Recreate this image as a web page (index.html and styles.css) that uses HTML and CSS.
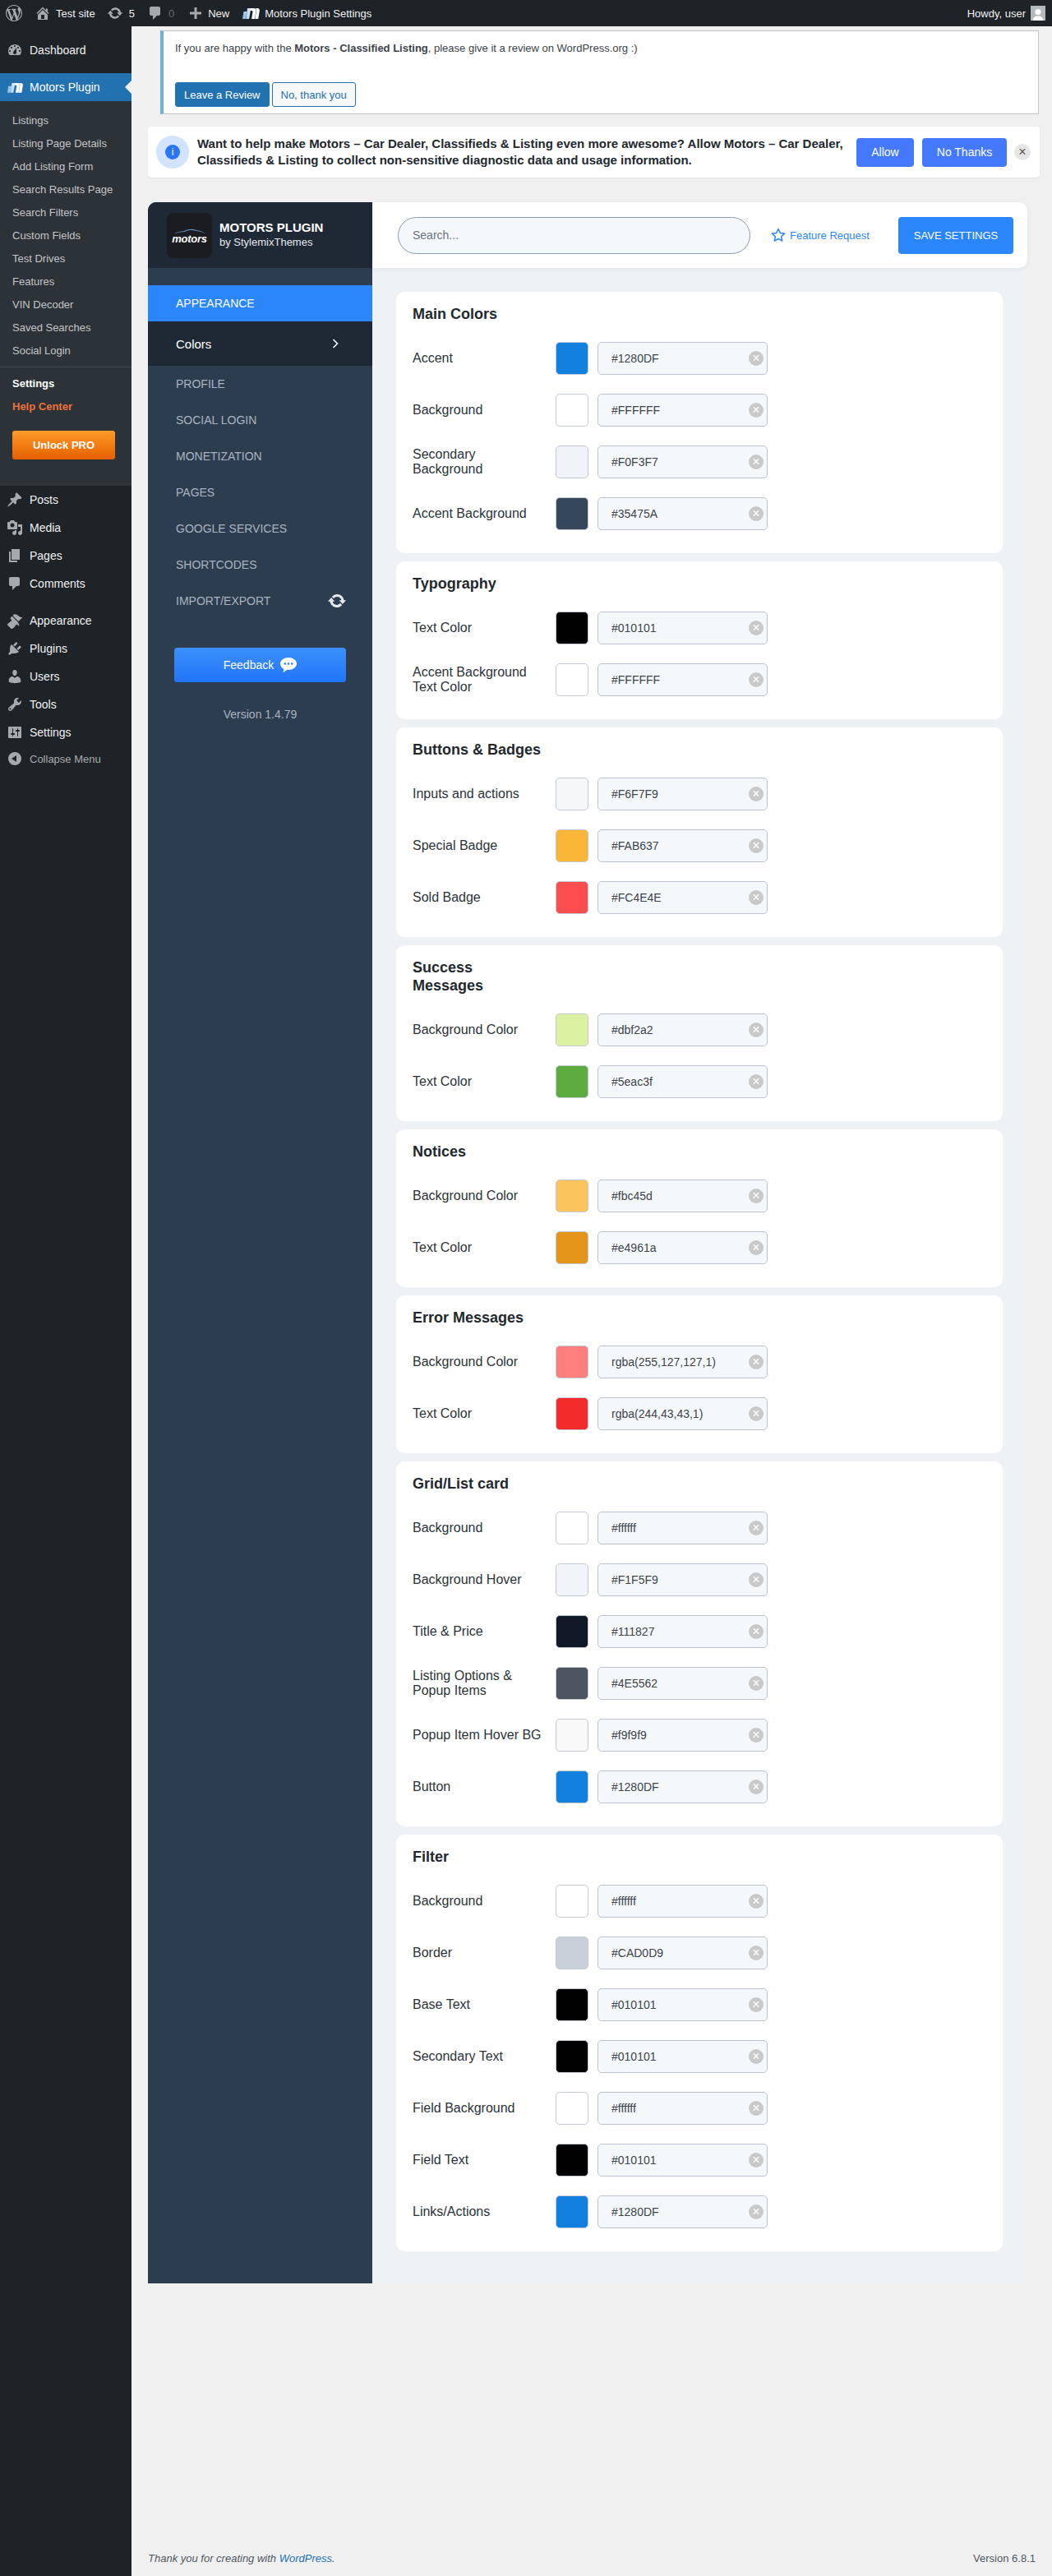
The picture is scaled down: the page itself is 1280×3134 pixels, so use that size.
FILE: index.html
```html
<!DOCTYPE html>
<html lang="en">
<head>
  <meta charset="UTF-8" />
  <title>Motors Plugin Settings</title>
  <link rel="stylesheet" href="styles.css">
</head>
<body>
  <svg class="sprite" xmlns="http://www.w3.org/2000/svg">
    <defs>
      <linearGradient id="mgrad" x1="0" x2="1" y1="0" y2="0"><stop offset="0" stop-color="#7fb4e8"/><stop offset="0.6" stop-color="#ffffff"/></linearGradient>
      <symbol id="i-wp" viewBox="0 0 20 20"><path d="M20 10c0-5.51-4.49-10-10-10C4.48 0 0 4.49 0 10c0 5.52 4.48 10 10 10 5.51 0 10-4.48 10-10zM7.78 15.37L4.37 6.22c.55-.02 1.17-.08 1.17-.08.5-.06.44-1.13-.06-1.11 0 0-1.45.11-2.37.11-.18 0-.37 0-.58-.01C4.12 2.69 6.87 1.11 10 1.11c2.33 0 4.45.87 6.05 2.34-.68-.11-1.65.39-1.65 1.58 0 .74.45 1.36.9 2.1.35.61.55 1.36.55 2.46 0 1.49-1.4 5-1.4 5l-3.03-8.37c.54-.02.82-.17.82-.17.5-.05.44-1.25-.06-1.22 0 0-1.44.12-2.38.12-.87 0-2.33-.12-2.33-.12-.5-.03-.56 1.2-.06 1.22l.92.08 1.26 3.41zM17.41 10c.24-.64.74-1.87.43-4.25.7 1.29 1.05 2.71 1.05 4.25 0 3.29-1.73 6.24-4.4 7.78.97-2.59 1.94-5.2 2.92-7.78zM6.1 18.09C3.12 16.65 1.11 13.53 1.11 10c0-1.3.23-2.48.72-3.59C3.25 10.3 4.67 14.2 6.1 18.09zm4.03-6.63l2.58 6.98c-.86.29-1.76.45-2.71.45-.79 0-1.57-.11-2.29-.33.81-2.38 1.62-4.74 2.42-7.1z"/></symbol>
      <symbol id="i-home" viewBox="0 0 20 20"><path d="M16 8.5l1.53 1.53-1.06 1.06L10 4.62l-6.47 6.47-1.06-1.06L10 2.5l4 4v-2h2v4zm-6-2.46l6 5.99V18H4v-5.97zM12 17v-5H8v5h4z"/></symbol>
      <symbol id="i-update" viewBox="0 0 20 20"><path d="M10.2 3.28c3.53 0 6.43 2.61 6.92 6h2.08l-3.5 4-3.5-4h2.32c-.45-1.97-2.21-3.45-4.32-3.45-1.45 0-2.73.71-3.54 1.78L4.95 5.66C6.23 4.2 8.11 3.28 10.2 3.28zm-.4 13.44c-3.52 0-6.43-2.61-6.92-6H.8l3.5-4c1.17 1.33 2.33 2.67 3.5 4H5.48c.45 1.97 2.21 3.45 4.32 3.45 1.45 0 2.73-.71 3.54-1.78l1.71 1.95c-1.28 1.46-3.15 2.38-5.25 2.38z"/></symbol>
      <symbol id="i-comment" viewBox="0 0 20 20"><path d="M5 2h9c1.1 0 2 .9 2 2v7c0 1.1-.9 2-2 2h-2l-5 5v-5H5c-1.1 0-2-.9-2-2V4c0-1.1.9-2 2-2z"/></symbol>
      <symbol id="i-plus" viewBox="0 0 20 20"><path d="M8.5 3h3v5.5H17v3h-5.5V17h-3v-5.5H3v-3h5.5z"/></symbol>
      <symbol id="i-m" viewBox="0 0 22 14"><path fill="url(#mgrad)" d="M2.4 5h3.9L4.8 14H.9zM7 1h8.2c2 0 2.7 1.3 2.4 3L16 14h-3.9l1.400-8.8c.1-.8-.2-1.2-1-1.2h-1.700L9 14H5.200zM17 1h2c2.200 0 3.100 1.300 2.800 3.300L20.200 14h-3.900l1.700-10c.2-1.500-.2-2.300-1-3z"/></symbol>
      <symbol id="i-dash" viewBox="0 0 20 20"><path d="M3.76 16h12.48c1.1-1.37 1.76-3.11 1.76-5 0-4.42-3.58-8-8-8s-8 3.58-8 8c0 1.89.66 3.63 1.76 5zM10 4c.55 0 1 .45 1 1s-.45 1-1 1-1-.45-1-1 .45-1 1-1zM6 6c.55 0 1 .45 1 1s-.45 1-1 1-1-.45-1-1 .45-1 1-1zm8 0c.55 0 1 .45 1 1s-.45 1-1 1-1-.45-1-1 .45-1 1-1zm-5.37 5.55L12 7v6c0 1.1-.9 2-2 2s-2-.9-2-2c0-.57.24-1.08.63-1.45zM4 10c.55 0 1 .45 1 1s-.45 1-1 1-1-.45-1-1 .45-1 1-1zm12 0c.55 0 1 .45 1 1s-.45 1-1 1-1-.45-1-1 .45-1 1-1z"/></symbol>
      <symbol id="i-pin" viewBox="0 0 20 20"><path d="M10.44 3.02l1.82-1.82 6.36 6.35-1.83 1.82c-1.05-.68-2.48-.57-3.41.36l-.75.75c-.92.93-1.04 2.35-.35 3.41l-1.83 1.82-2.41-2.41-2.8 2.79c-.42.42-3.38 2.71-3.8 2.29s1.86-3.39 2.28-3.81l2.79-2.79L4.1 9.36l1.83-1.82c1.05.69 2.48.57 3.4-.36l.75-.75c.93-.92 1.05-2.35.36-3.41z"/></symbol>
      <symbol id="i-media" viewBox="0 0 20 20"><path d="M13 11V4c0-.55-.45-1-1-1h-1.67L9 1H5L3.67 3H2c-.55 0-1 .45-1 1v7c0 .55.45 1 1 1h10c.55 0 1-.45 1-1zM7 4.5c1.38 0 2.5 1.12 2.5 2.5S8.38 9.5 7 9.5 4.5 8.38 4.5 7 5.62 4.5 7 4.5zM14 6h5v10.5c0 1.38-1.12 2.5-2.5 2.5S14 17.88 14 16.5s1.12-2.5 2.5-2.5c.17 0 .34.02.5.05V9h-3V6zm-4 8.05V13h2v3.5c0 1.38-1.12 2.5-2.5 2.5S7 17.88 7 16.5 8.12 14 9.5 14c.17 0 .34.02.5.05z"/></symbol>
      <symbol id="i-page" viewBox="0 0 20 20"><path d="M6 15V2h10v13H6zm-1 1h8v2H3V5h2v11z"/></symbol>
      <symbol id="i-brush" viewBox="0 0 20 20"><path d="M14.48 11.06L7.41 3.99l1.5-1.5c.5-.56 2.3-.47 3.51.32 1.21.8 1.43 1.28 2.91 2.1 1.18.64 2.45 1.26 4.45.85zm-.71.71L6.7 4.7 4.93 6.47c-.39.39-.39 1.02 0 1.41l1.06 1.06c.39.39.39 1.03 0 1.42-.6.6-1.43 1.11-2.21 1.69-.35.26-.7.53-1.01.84C1.43 13.23.4 14.75 1.4 15.74c.1.1 2.96 3 3.96 3.9 1 1 2.52-.03 3.86-1.37.31-.31.58-.66.84-1.01.58-.78 1.09-1.61 1.69-2.21.39-.39 1.02-.39 1.41 0l1.06 1.06c.39.39 1.02.39 1.41 0z"/></symbol>
      <symbol id="i-plug" viewBox="0 0 20 20"><path d="M13.11 4.36L9.87 7.6 8 5.73l3.24-3.24c.35-.34 1.05-.2 1.56.32.52.51.66 1.21.31 1.55zm-8 1.77l.91-1.12 9.01 9.01-1.19.84c-.71.71-2.63 1.16-3.82 1.16H6.14L4.9 17.26c-.59.59-1.54.59-2.12 0-.59-.58-.59-1.53 0-2.12l1.24-1.24v-3.88c0-1.13.4-3.19 1.09-3.89zm7.26 3.97l3.24-3.24c.34-.35 1.04-.21 1.55.31.52.51.66 1.21.31 1.55l-3.24 3.25z"/></symbol>
      <symbol id="i-users" viewBox="0 0 20 20"><path d="M10 9.25c-2.27 0-2.73-3.44-2.73-3.44C7 4.02 7.82 2 9.97 2c2.16 0 2.98 2.02 2.71 3.81 0 0-.41 3.44-2.68 3.44zm0 2.57L12.72 10c2.39 0 4.52 2.33 4.52 4.53v2.49s-3.65 1.13-7.24 1.13c-3.65 0-7.24-1.13-7.24-1.13v-2.49c0-2.25 1.94-4.48 4.47-4.48z"/></symbol>
      <symbol id="i-tools" viewBox="0 0 20 20"><path d="M16.68 9.77c-1.34 1.34-3.3 1.67-4.95.99l-5.41 6.52c-.99.99-2.59.99-3.58 0s-.99-2.59 0-3.57l6.52-5.42c-.68-1.65-.35-3.61.99-4.95 1.28-1.28 3.12-1.62 4.72-1.06l-2.89 2.89 2.82 2.82 2.86-2.87c.53 1.58.18 3.39-1.08 4.65zM3.81 16.21c.4.39 1.04.39 1.43 0 .4-.4.4-1.04 0-1.43-.39-.4-1.03-.4-1.43 0-.39.39-.39 1.03 0 1.43z"/></symbol>
      <symbol id="i-settings" viewBox="0 0 20 20"><path d="M18 16V4c0-.55-.45-1-1-1H3c-.55 0-1 .45-1 1v12c0 .55.45 1 1 1h14c.55 0 1-.45 1-1zM8 11h1c.55 0 1 .45 1 1s-.45 1-1 1H8v1.5c0 .28-.22.5-.5.5s-.5-.22-.5-.5V13H6c-.55 0-1-.45-1-1s.45-1 1-1h1V5.5c0-.28.22-.5.5-.5s.5.22.5.5V11zm5-2h-1c-.55 0-1-.45-1-1s.45-1 1-1h1V5.5c0-.28.22-.5.5-.5s.5.22.5.5V7h1c.55 0 1 .45 1 1s-.45 1-1 1h-1v5.5c0 .28-.22.5-.5.5s-.5-.22-.5-.5V9z"/></symbol>
      <symbol id="i-collapse" viewBox="0 0 20 20"><path fill-rule="evenodd" d="M10 2a8 8 0 1 0 0 16 8 8 0 0 0 0-16zm2 4v8l-6-4z"/></symbol>
    </defs>
  </svg>

  <header class="adminbar">
    <a class="ab-item ab-logo"><svg class="ab-icon-lg"><use href="#i-wp"/></svg></a>
    <a class="ab-item"><svg class="ab-icon"><use href="#i-home"/></svg>Test site</a>
    <a class="ab-item ab-update"><svg class="ab-icon"><use href="#i-update"/></svg>5</a>
    <a class="ab-item ab-comment"><svg class="ab-icon"><use href="#i-comment"/></svg><span class="ab-dim">0</span></a>
    <a class="ab-item ab-new"><svg class="ab-icon"><use href="#i-plus"/></svg>New</a>
    <a class="ab-item ab-motors"><svg class="ab-m"><use href="#i-m"/></svg>Motors Plugin Settings</a>
    <a class="ab-item ab-user">Howdy, user<span class="avatar"><svg viewBox="0 0 18 18"><circle cx="9" cy="7.5" r="3.6" fill="#fff"/><path d="M2.5 18c.5-4 3-5.500 6.500-5.500s6 1.500 6.500 5.500z" fill="#fff"/></svg></span></a>
  </header>

  <div class="layout">
    <nav class="wp-menu">
      <a class="menu-item menu-first"><svg><use href="#i-dash"/></svg>Dashboard</a>
      <a class="menu-item menu-current"><svg class="menu-m"><use href="#i-m"/></svg>Motors Plugin</a>
      <div class="submenu">
        <a>Listings</a>
        <a>Listing Page Details</a>
        <a>Add Listing Form</a>
        <a>Search Results Page</a>
        <a>Search Filters</a>
        <a>Custom Fields</a>
        <a>Test Drives</a>
        <a>Features</a>
        <a>VIN Decoder</a>
        <a>Saved Searches</a>
        <a>Social Login</a>
        <div class="submenu-sep"></div>
        <a class="sub-active">Settings</a>
        <a class="sub-help">Help Center</a>
        <a class="unlock-pro">Unlock PRO</a>
      </div>
      <a class="menu-item"><svg><use href="#i-pin"/></svg>Posts</a>
      <a class="menu-item"><svg><use href="#i-media"/></svg>Media</a>
      <a class="menu-item"><svg><use href="#i-page"/></svg>Pages</a>
      <a class="menu-item"><svg><use href="#i-comment"/></svg>Comments</a>
      <a class="menu-item menu-gap"><svg><use href="#i-brush"/></svg>Appearance</a>
      <a class="menu-item"><svg><use href="#i-plug"/></svg>Plugins</a>
      <a class="menu-item"><svg><use href="#i-users"/></svg>Users</a>
      <a class="menu-item"><svg><use href="#i-tools"/></svg>Tools</a>
      <a class="menu-item"><svg><use href="#i-settings"/></svg>Settings</a>
      <a class="menu-item menu-collapse"><svg><use href="#i-collapse"/></svg>Collapse Menu</a>
    </nav>

    <div class="content">
      <div class="review-notice">
        <p>If you are happy with the <strong>Motors - Classified Listing</strong>, please give it a review on WordPress.org :)</p>
        <div class="review-actions">
          <a class="wp-btn wp-btn-primary">Leave a Review</a>
          <a class="wp-btn">No, thank you</a>
        </div>
      </div>

      <div class="telemetry">
        <span class="telemetry-icon"><span class="telemetry-dot">i</span></span>
        <div class="telemetry-text">Want to help make Motors – Car Dealer, Classifieds &amp; Listing even more awesome? Allow Motors – Car Dealer, Classifieds &amp; Listing to collect non-sensitive diagnostic data and usage information.</div>
        <a class="telemetry-btn telemetry-allow">Allow</a>
        <a class="telemetry-btn telemetry-no">No Thanks</a>
        <span class="telemetry-close">×</span>
      </div>

      <div class="panel">
        <aside class="panel-side">
          <div class="panel-head">
            <div class="panel-logo">
              <svg class="logo-car" viewBox="0 0 40 7"><path d="M0 6.5C4 4 9 3.5 13 3 18 .5 24 .2 28 2c4 .6 8 1.800 11 4-3-1.500-7-2.500-11-3C23 1.500 18 1.800 14 4 9 4.300 4 5 0 6.500z" fill="#5d8fc4"/></svg>
              <span class="logo-text">motors</span>
            </div>
            <div>
              <div class="panel-title">MOTORS PLUGIN</div>
              <div class="panel-sub">by StylemixThemes</div>
            </div>
          </div>
          <div class="panel-nav">
            <a class="nav-tab nav-active">APPEARANCE</a>
            <a class="nav-sub">Colors
              <svg viewBox="0 0 8 12"><path d="M1.5 1l5 5-5 5" fill="none" stroke="#fff" stroke-width="1.5"/></svg>
            </a>
            <a class="nav-tab">PROFILE</a>
            <a class="nav-tab">SOCIAL LOGIN</a>
            <a class="nav-tab">MONETIZATION</a>
            <a class="nav-tab">PAGES</a>
            <a class="nav-tab">GOOGLE SERVICES</a>
            <a class="nav-tab">SHORTCODES</a>
            <a class="nav-tab nav-import">IMPORT/EXPORT
              <svg viewBox="0 0 20 20"><use href="#i-update"/></svg>
            </a>
          </div>
          <a class="feedback">Feedback
            <svg viewBox="0 0 20 18"><path fill="#fff" d="M10 0c5.5 0 10 3.3 10 7.5S15.5 15 10 15c-.7 0-1.400-.1-2-.2C6.800 16.300 5 17.500 3 18c.8-1 1.300-2.200 1.400-3.900C1.700 12.800 0 10.300 0 7.500 0 3.300 4.500 0 10 0z"/><circle cx="5.8" cy="7.5" r="1.3" fill="#2a7ff5"/><circle cx="10" cy="7.5" r="1.3" fill="#2a7ff5"/><circle cx="14.2" cy="7.5" r="1.3" fill="#2a7ff5"/></svg>
          </a>
          <div class="panel-version">Version 1.4.79</div>
        </aside>

        <main class="panel-main">
          <div class="topbar">
            <input class="search" type="text" placeholder="Search..." />
            <a class="feature-link">
              <svg viewBox="0 0 18 18"><path d="M9 1.5l2.300 4.900 5.300.7-3.900 3.700 1 5.300L9 13.500l-4.700 2.600 1-5.300-3.900-3.700 5.300-.7z" fill="none" stroke="#2b85fb" stroke-width="1.5" stroke-linejoin="round"/></svg>
              Feature Request
            </a>
            <a class="save-btn">SAVE SETTINGS</a>
          </div>

          <section class="card">
            <h2>Main Colors</h2>
            <div class="row"><span class="row-label">Accent</span><span class="swatch" style="background:#1280DF"></span><div class="hex"><span>#1280DF</span><i class="clear"></i></div></div>
            <div class="row"><span class="row-label">Background</span><span class="swatch" style="background:#FFFFFF"></span><div class="hex"><span>#FFFFFF</span><i class="clear"></i></div></div>
            <div class="row"><span class="row-label">Secondary Background</span><span class="swatch" style="background:#F0F3F7"></span><div class="hex"><span>#F0F3F7</span><i class="clear"></i></div></div>
            <div class="row"><span class="row-label">Accent Background</span><span class="swatch" style="background:#35475A"></span><div class="hex"><span>#35475A</span><i class="clear"></i></div></div>
          </section>

          <section class="card">
            <h2>Typography</h2>
            <div class="row"><span class="row-label">Text Color</span><span class="swatch" style="background:#010101"></span><div class="hex"><span>#010101</span><i class="clear"></i></div></div>
            <div class="row"><span class="row-label">Accent Background Text Color</span><span class="swatch" style="background:#FFFFFF"></span><div class="hex"><span>#FFFFFF</span><i class="clear"></i></div></div>
          </section>

          <section class="card">
            <h2>Buttons &amp; Badges</h2>
            <div class="row"><span class="row-label">Inputs and actions</span><span class="swatch" style="background:#F6F7F9"></span><div class="hex"><span>#F6F7F9</span><i class="clear"></i></div></div>
            <div class="row"><span class="row-label">Special Badge</span><span class="swatch" style="background:#FAB637"></span><div class="hex"><span>#FAB637</span><i class="clear"></i></div></div>
            <div class="row"><span class="row-label">Sold Badge</span><span class="swatch" style="background:#FC4E4E"></span><div class="hex"><span>#FC4E4E</span><i class="clear"></i></div></div>
          </section>

          <section class="card">
            <h2>Success Messages</h2>
            <div class="row"><span class="row-label">Background Color</span><span class="swatch" style="background:#dbf2a2"></span><div class="hex"><span>#dbf2a2</span><i class="clear"></i></div></div>
            <div class="row"><span class="row-label">Text Color</span><span class="swatch" style="background:#5eac3f"></span><div class="hex"><span>#5eac3f</span><i class="clear"></i></div></div>
          </section>

          <section class="card">
            <h2>Notices</h2>
            <div class="row"><span class="row-label">Background Color</span><span class="swatch" style="background:#fbc45d"></span><div class="hex"><span>#fbc45d</span><i class="clear"></i></div></div>
            <div class="row"><span class="row-label">Text Color</span><span class="swatch" style="background:#e4961a"></span><div class="hex"><span>#e4961a</span><i class="clear"></i></div></div>
          </section>

          <section class="card">
            <h2>Error Messages</h2>
            <div class="row"><span class="row-label">Background Color</span><span class="swatch" style="background:rgba(255,127,127,1)"></span><div class="hex"><span>rgba(255,127,127,1)</span><i class="clear"></i></div></div>
            <div class="row"><span class="row-label">Text Color</span><span class="swatch" style="background:rgba(244,43,43,1)"></span><div class="hex"><span>rgba(244,43,43,1)</span><i class="clear"></i></div></div>
          </section>

          <section class="card">
            <h2>Grid/List card</h2>
            <div class="row"><span class="row-label">Background</span><span class="swatch" style="background:#ffffff"></span><div class="hex"><span>#ffffff</span><i class="clear"></i></div></div>
            <div class="row"><span class="row-label">Background Hover</span><span class="swatch" style="background:#F1F5F9"></span><div class="hex"><span>#F1F5F9</span><i class="clear"></i></div></div>
            <div class="row"><span class="row-label">Title &amp; Price</span><span class="swatch" style="background:#111827"></span><div class="hex"><span>#111827</span><i class="clear"></i></div></div>
            <div class="row"><span class="row-label">Listing Options &amp; Popup Items</span><span class="swatch" style="background:#4E5562"></span><div class="hex"><span>#4E5562</span><i class="clear"></i></div></div>
            <div class="row"><span class="row-label">Popup Item Hover BG</span><span class="swatch" style="background:#f9f9f9"></span><div class="hex"><span>#f9f9f9</span><i class="clear"></i></div></div>
            <div class="row"><span class="row-label">Button</span><span class="swatch" style="background:#1280DF"></span><div class="hex"><span>#1280DF</span><i class="clear"></i></div></div>
          </section>

          <section class="card">
            <h2>Filter</h2>
            <div class="row"><span class="row-label">Background</span><span class="swatch" style="background:#ffffff"></span><div class="hex"><span>#ffffff</span><i class="clear"></i></div></div>
            <div class="row"><span class="row-label">Border</span><span class="swatch" style="background:#CAD0D9"></span><div class="hex"><span>#CAD0D9</span><i class="clear"></i></div></div>
            <div class="row"><span class="row-label">Base Text</span><span class="swatch" style="background:#010101"></span><div class="hex"><span>#010101</span><i class="clear"></i></div></div>
            <div class="row"><span class="row-label">Secondary Text</span><span class="swatch" style="background:#010101"></span><div class="hex"><span>#010101</span><i class="clear"></i></div></div>
            <div class="row"><span class="row-label">Field Background</span><span class="swatch" style="background:#ffffff"></span><div class="hex"><span>#ffffff</span><i class="clear"></i></div></div>
            <div class="row"><span class="row-label">Field Text</span><span class="swatch" style="background:#010101"></span><div class="hex"><span>#010101</span><i class="clear"></i></div></div>
            <div class="row"><span class="row-label">Links/Actions</span><span class="swatch" style="background:#1280DF"></span><div class="hex"><span>#1280DF</span><i class="clear"></i></div></div>
          </section>
        </main>
      </div>

      <footer class="wp-footer">
        <em>Thank you for creating with <a>WordPress</a>.</em>
        <span>Version 6.8.1</span>
      </footer>
    </div>
  </div>
</body>
</html>
```

FILE: styles.css
```css
:root {
  --bar-dark: #1d2327;
  --sub-dark: #2c3338;
  --wp-blue: #2271b1;
  --plugin-blue: #2b85fb;
  --panel-dark: #1f2936;
  --panel-slate: #2d3d50;
}

* {
  box-sizing: border-box;
}

html, body {
  margin: 0;
  padding: 0;
}

body {
  display: flex;
  flex-direction: column;
  min-height: 100vh;
  background: #f0f0f1;
  color: #3c434a;
  font-family: "Liberation Sans", Arial, sans-serif;
  font-size: 13px;
}

.sprite {
  display: block;
  width: 0;
  height: 0;
}

/* admin bar */
.adminbar {
  display: flex;
  align-items: center;
  height: 32px;
  background: var(--bar-dark);
  color: #f0f0f1;
}

.ab-item {
  display: flex;
  align-items: center;
  height: 32px;
  padding: 0 8px;
  gap: 6px;
}

.ab-icon, .ab-icon-lg {
  width: 20px;
  height: 20px;
  fill: #a7aaad;
}

.ab-icon {
  margin-left: -2px;
}

.ab-logo {
  padding: 0 9px 0 7px;
}

.ab-update {
  gap: 7px;
}

.ab-comment .ab-icon {
  margin-left: -1px;
}

.ab-new {
  gap: 5px;
}

.ab-new .ab-icon {
  margin-left: 0;
}

.ab-motors {
  gap: 6px;
}

.ab-m {
  width: 22px;
  height: 14px;
  margin-left: -1px;
}

.ab-dim {
  color: #646970;
}

.ab-user {
  margin-left: auto;
}

.avatar {
  display: block;
  width: 18px;
  height: 18px;
  background: #b4b9be;
  overflow: hidden;
}

.avatar svg {
  display: block;
}

/* wp side menu */
.layout {
  display: flex;
  flex: 1;
}

.wp-menu {
  flex: none;
  width: 160px;
  background: var(--bar-dark);
  font-size: 14px;
  color: #f0f0f1;
}

.menu-item {
  display: flex;
  align-items: center;
  height: 34px;
  position: relative;
}

.menu-item svg {
  flex: none;
  width: 20px;
  height: 20px;
  margin: 0 8px;
  fill: #a7aaad;
}

.menu-first {
  margin-top: 12px;
  margin-bottom: 11px;
}

.menu-gap {
  margin-top: 11px;
}

.menu-current {
  background: var(--wp-blue);
  color: #fff;
}

.menu-current::after {
  content: '';
  position: absolute;
  right: 0;
  top: 50%;
  margin-top: -8px;
  border: 8px solid transparent;
  border-right-color: #f0f0f1;
  border-left-width: 0;
}

.menu-item .menu-m {
  width: 20px;
  height: 13px;
}

.menu-collapse {
  height: 30px;
  font-size: 13px;
  color: #a7aaad;
}

.submenu {
  display: flex;
  flex-direction: column;
  height: 468px;
  padding-top: 9px;
  background: var(--sub-dark);
  font-size: 13px;
  color: #c3c4c7;
}

.submenu > a {
  display: flex;
  align-items: center;
  height: 28px;
  padding-left: 15px;
}

.submenu-sep {
  height: 1px;
  margin: 6px 0 5px;
  background: #454c52;
}

.submenu .sub-active {
  font-weight: bold;
  color: #fff;
}

.submenu .sub-help {
  font-weight: bold;
  color: #f0703a;
}

.submenu .unlock-pro {
  justify-content: center;
  width: 125px;
  height: 35px;
  margin: 16px 0 0 15px;
  padding: 0;
  border-radius: 3px;
  background: linear-gradient(180deg, #fd9b27, #e65f00);
  color: #fff;
  font-weight: bold;
}

/* page content */
.content {
  display: flex;
  flex-direction: column;
  flex: 1;
  min-width: 0;
  padding: 0 15px 0 20px;
}

.review-notice {
  height: 102px;
  margin: 5px 1px 0 15px;
  padding: 12px 14px 0;
  background: #fff;
  border: 1px solid #c3c4c7;
  border-left: 4px solid #72aee6;
}

.review-notice p {
  margin: 0;
  line-height: 18px;
}

.review-actions {
  display: flex;
  gap: 3px;
  margin-top: 32px;
}

.wp-btn {
  display: flex;
  align-items: center;
  justify-content: center;
  height: 30px;
  padding: 0 10px;
  border: 1px solid var(--wp-blue);
  border-radius: 3px;
  background: #f6f7f7;
  color: var(--wp-blue);
}

.wp-btn-primary {
  background: var(--wp-blue);
  color: #fff;
}

.telemetry {
  display: flex;
  align-items: center;
  height: 62px;
  margin-top: 15px;
  padding: 0 11px 0 10px;
  background: #fff;
  border-radius: 4px;
  box-shadow: 0 1px 2px rgba(0, 0, 0, 0.06);
}

.telemetry-icon {
  display: flex;
  flex: none;
  align-items: center;
  justify-content: center;
  width: 40px;
  height: 40px;
  border-radius: 50%;
  background: #d2e3fd;
}

.telemetry-dot {
  display: flex;
  align-items: center;
  justify-content: center;
  width: 18px;
  height: 18px;
  border-radius: 50%;
  background: #2a75f5;
  color: #fff;
  font-size: 12px;
}

.telemetry-text {
  flex: 1;
  margin: 0 14px 0 10px;
  color: #23282d;
  font-size: 15px;
  font-weight: bold;
  line-height: 20px;
}

.telemetry-btn {
  display: flex;
  align-items: center;
  justify-content: center;
  height: 35px;
  border-radius: 4px;
  background: #4479ff;
  color: #fff;
  font-size: 14px;
}

.telemetry-allow {
  width: 70px;
  margin-right: 10px;
}

.telemetry-no {
  width: 103px;
  margin-right: 9px;
}

.telemetry-close {
  display: flex;
  align-items: center;
  justify-content: center;
  width: 20px;
  height: 20px;
  border-radius: 50%;
  background: #e6e6e6;
  color: #555;
  font-size: 16px;
}

/* plugin panel */
.panel {
  display: flex;
  width: 1070px;
  margin-top: 30px;
}

.panel-side {
  flex: none;
  width: 273px;
  background: var(--panel-slate);
  border-radius: 10px 0 0 0;
}

.panel-head {
  display: flex;
  align-items: center;
  gap: 9px;
  height: 80px;
  padding-left: 23px;
  background: var(--panel-dark);
  border-radius: 10px 0 0 0;
}

.panel-logo {
  display: flex;
  flex-direction: column;
  align-items: center;
  justify-content: center;
  width: 55px;
  height: 55px;
  padding-top: 3px;
  border-radius: 8px;
  background: #1a1c1f;
}

.logo-car {
  width: 40px;
  height: 7px;
}

.logo-text {
  color: #fff;
  font-size: 13px;
  font-style: italic;
  font-weight: bold;
  line-height: 12px;
  letter-spacing: -0.3px;
}

.panel-title {
  color: #fff;
  font-size: 15px;
  font-weight: bold;
  line-height: 18px;
}

.panel-sub {
  color: #e4e7eb;
  font-size: 13px;
  line-height: 18px;
}

.panel-nav {
  padding-top: 21px;
  font-size: 14px;
  color: #a9b4c0;
}

.nav-tab {
  display: flex;
  align-items: center;
  justify-content: space-between;
  height: 44px;
  padding: 0 32px 0 34px;
}

.nav-active {
  background: var(--plugin-blue);
  color: #fff;
}

.nav-sub {
  display: flex;
  align-items: center;
  justify-content: space-between;
  height: 54px;
  padding: 0 41px 0 34px;
  background: var(--panel-dark);
  color: #fff;
  font-size: 15px;
}

.nav-sub svg {
  width: 8px;
  height: 12px;
}

.nav-import svg {
  width: 24px;
  height: 24px;
  margin-right: -1px;
  fill: #e4e9ee;
}

.feedback {
  display: flex;
  align-items: center;
  justify-content: center;
  gap: 8px;
  width: 209px;
  height: 42px;
  margin: 35px 0 0 32px;
  border-radius: 4px;
  background: linear-gradient(180deg, #3b90fb, #2274f8);
  color: #fff;
  font-size: 14px;
}

.feedback svg {
  width: 20px;
  height: 18px;
}

.panel-version {
  margin-top: 30px;
  color: #a9b4c0;
  font-size: 14px;
  line-height: 18px;
  text-align: center;
}

.panel-main {
  flex: 1;
  min-width: 0;
  padding-bottom: 29px;
  background: #eff2f5;
}

.topbar {
  display: flex;
  align-items: center;
  height: 80px;
  margin-bottom: 29px;
  padding: 0 17px 0 31px;
  background: #fff;
  border-radius: 0 10px 10px 0;
  box-shadow: 0 2px 6px rgba(0, 0, 0, 0.05);
}

.search {
  width: 429px;
  height: 45px;
  padding: 0 17px;
  border: 1px solid #8d9bad;
  border-radius: 23px;
  background: #f5f8fb;
  font-family: inherit;
  font-size: 14px;
}

.search::placeholder {
  color: #6b7280;
}

.feature-link {
  display: flex;
  align-items: center;
  gap: 5px;
  margin-left: 25px;
  color: var(--plugin-blue);
}

.feature-link svg {
  width: 18px;
  height: 18px;
}

.save-btn {
  display: flex;
  align-items: center;
  justify-content: center;
  width: 140px;
  height: 45px;
  margin-left: auto;
  border-radius: 4px;
  background: var(--plugin-blue);
  color: #fff;
}

.card {
  margin: 0 30px 10px 29px;
  padding: 16px 20px 5px;
  background: #fff;
  border-radius: 10px;
}

.card h2 {
  width: 158px;
  margin: 0 0 23px;
  color: #23282d;
  font-size: 18px;
  font-weight: bold;
  line-height: 22px;
}

.row {
  display: flex;
  align-items: center;
  margin-bottom: 23px;
}

.row-label {
  flex: none;
  width: 158px;
  margin-right: 16px;
  color: #2c3338;
  font-size: 16px;
  line-height: 18px;
}

.swatch {
  flex: none;
  width: 40px;
  height: 40px;
  margin-right: 11px;
  border: 1px solid #c3c9d3;
  border-radius: 5px;
}

.hex {
  display: flex;
  align-items: center;
  justify-content: space-between;
  width: 207px;
  height: 40px;
  padding: 0 4px 0 16px;
  border: 1px solid #bcc3cf;
  border-radius: 5px;
  background: #f5f8fb;
  color: #3c434a;
  font-size: 14px;
}

.clear {
  display: flex;
  align-items: center;
  justify-content: center;
  width: 18px;
  height: 18px;
  border-radius: 50%;
  background: #c9c9c9;
  color: #fff;
  font-style: normal;
  font-size: 16px;
  line-height: 1;
}

.clear::before {
  content: '\00d7';
}

.wp-footer {
  display: flex;
  justify-content: space-between;
  margin-top: auto;
  padding: 0 5px 12px 0;
  color: #50575e;
  line-height: 18px;
}

.wp-footer a {
  color: var(--wp-blue);
}
```
